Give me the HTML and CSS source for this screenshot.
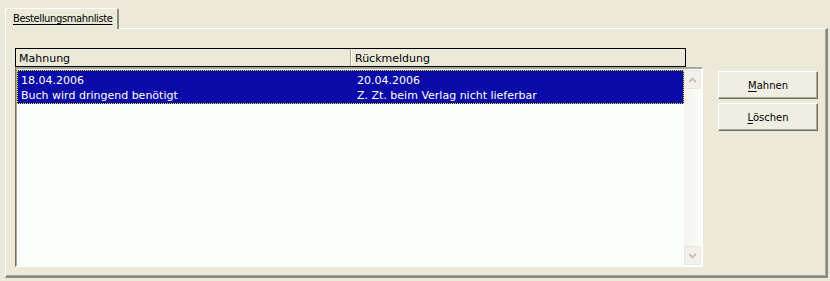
FILE: index.html
```html
<!DOCTYPE html>
<html>
<head>
<meta charset="utf-8">
<link rel="stylesheet" href="styles.css">
</head>
<body>
<div class="window">
  <div class="tabs">
    <div class="tab"><span class="u">Bestellungsmahnliste</span></div>
    <div class="tab-rest"></div>
  </div>
  <div class="panel">
    <div class="listcol">
      <div class="header">
        <div class="hcell c1">Mahnung</div>
        <div class="hcell c2">Rückmeldung</div>
      </div>
      <div class="list">
        <div class="rows">
          <div class="row selected">
            <div class="cell c1"><div>18.04.2006</div><div>Buch wird dringend benötigt</div></div>
            <div class="cell c2"><div>20.04.2006</div><div>Z. Zt. beim Verlag nicht lieferbar</div></div>
          </div>
        </div>
        <div class="scrollbar">
          <div class="sbtn">
            <svg width="9" height="6" viewBox="0 0 9 6"><path d="M1 5 L4.5 1.5 L8 5" fill="none" stroke="#c9c7ba" stroke-width="2"/></svg>
          </div>
          <div class="track"></div>
          <div class="sbtn">
            <svg width="9" height="6" viewBox="0 0 9 6"><path d="M1 1 L4.5 4.5 L8 1" fill="none" stroke="#c9c7ba" stroke-width="2"/></svg>
          </div>
        </div>
      </div>
    </div>
    <div class="buttons">
      <button class="btn"><span class="u">M</span>ahnen</button>
      <button class="btn"><span class="u">L</span>öschen</button>
    </div>
  </div>
</div>
</body>
</html>
```

FILE: styles.css
```css
html, body {
  margin: 0;
  padding: 0;
  background: #ece9d8;
  width: 830px;
  height: 281px;
  overflow: hidden;
  font-family: "DejaVu Sans", Tahoma, sans-serif;
  font-size: 11px;
  color: #000;
}
.window {
  padding: 8px 0 0 5px;
}
.tabs {
  display: flex;
  height: 20px;
}
.tab {
  width: 104px;
  height: 20px;
  border-top: 1px solid #ffffff;
  border-left: 1px solid #ffffff;
  border-right: 2px solid #8c8a7f;
  border-top-left-radius: 2px;
  border-top-right-radius: 2px;
  background: #ece9d8;
  box-sizing: content-box;
  padding-left: 7px;
  line-height: 19px;
  font-size: 10px;
  letter-spacing: -0.4px;
  white-space: nowrap;
  position: relative;
  z-index: 1;
}
.u { text-decoration: underline; text-underline-offset: 2px; }
.tab-rest { flex: 1; }
.panel {
  width: 811px;
  height: 228px;
  border-top: 1px solid #ffffff;
  border-left: 1px solid #ffffff;
  border-right: 2px solid #8c8a7f;
  border-bottom: 2px solid #8c8a7f;
  box-shadow: inset -1px -1px 0 #aca899;
  display: flex;
  padding: 19px 0 0 9px;
  box-sizing: content-box;
}
.listcol {
  width: 688px;
  display: flex;
  flex-direction: column;
}
.header {
  display: flex;
  width: 669px;
  height: 17px;
  border: 1px solid #000;
  background: #ece9d8;
  line-height: 19px;
}
.hcell { padding-left: 3px; box-sizing: border-box; }
.header .c1 { width: 335px; border-right: 1px solid #aca899; }
.header .c2 { flex: 1; border-left: 1px solid #fff; }
.list {
  width: 688px;
  height: 200px;
  box-sizing: border-box;
  border-top: 1px solid #aca899;
  border-left: 1px solid #716f64;
  border-right: 1px solid #fff;
  border-bottom: 1px solid #fff;
  box-shadow: inset 1px 1px 0 #aca899;
  background: #fcfefc;
  display: flex;
  padding: 2px 1px 1px 1px;
}
.rows { flex: 1; }
.row.selected {
  display: flex;
  background: #0a0aa8;
  color: #fff;
  height: 34px;
  box-sizing: border-box;
  outline: 1px dotted #e8e800;
  outline-offset: -1px;
  line-height: 15px;
  padding-top: 3px;
}
.cell { box-sizing: border-box; padding-left: 4px; }
.row .c1 { width: 336px; }
.row .c2 { flex: 1; }
.scrollbar {
  width: 17px;
  display: flex;
  flex-direction: column;
  background: linear-gradient(to right, #f4f3ee, #fcfcf8);
}
.sbtn {
  height: 19px;
  box-sizing: border-box;
  border: 1px solid #e8e6dd;
  border-radius: 2px;
  background: #f1f0ea;
  display: flex;
  align-items: center;
  justify-content: center;
}
.track { flex: 1; }
.buttons {
  display: flex;
  flex-direction: column;
  gap: 4px;
  margin-left: 15px;
  padding-top: 23px;
}
.btn {
  width: 100px;
  height: 28px;
  font-family: "DejaVu Sans", Tahoma, sans-serif;
  font-size: 10px;
  color: #000;
  background: #f0eee2;
  border: 1px solid;
  border-color: #ffffff #716f64 #716f64 #ffffff;
  box-shadow: inset -1px -1px 0 #aca899;
  padding: 0;
}
```
